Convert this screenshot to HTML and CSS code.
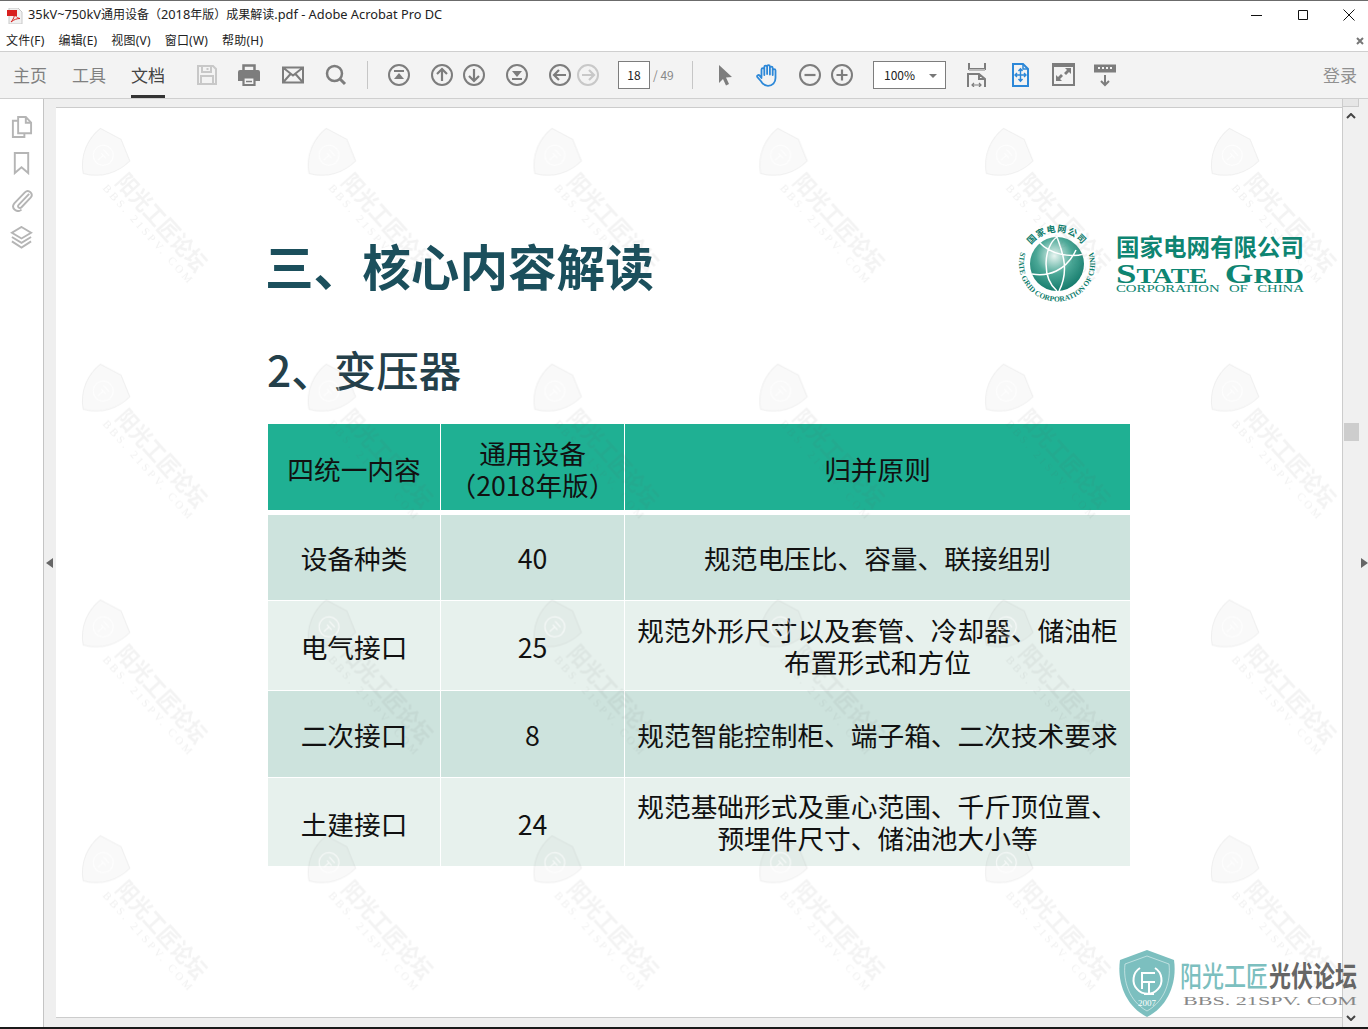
FILE: index.html
```html
<!DOCTYPE html>
<html lang="zh-CN">
<head>
<meta charset="utf-8">
<title>35kV~750kV通用设备（2018年版）成果解读.pdf - Adobe Acrobat Pro DC</title>
<link rel="stylesheet" href="styles.css">
</head>
<body>
<div class="app">
  <header class="titlebar">
    <svg class="pdficon" viewBox="0 0 16 16"><path d="M2 0h9l4 4v12H2z" fill="#f1f1f1" stroke="#c9c9c9"/><path d="M0 2h10v6H0z" fill="#d8201f"/><path d="M4 14c2-2 4-6 3.500-9 1 4 3 5 5.500 5.500-3 0-6 1-9 3.500z" fill="none" stroke="#d8201f"/></svg>
    <span class="wintitle"><span class="lat">35kV~750kV</span>通用设备（<span class="lat">2018</span>年版）成果解读<span class="lat">.pdf - Adobe Acrobat Pro DC</span></span>
    <div class="winctl">
      <svg viewBox="0 0 12 12"><path d="M0 6.500h11" stroke="#111"/></svg>
      <svg viewBox="0 0 12 12"><path d="M1.500 1.500h9v9h-9z" fill="none" stroke="#111"/></svg>
      <svg viewBox="0 0 12 12"><path d="M.5.500l11 11M11.500.500l-11 11" stroke="#111"/></svg>
    </div>
  </header>
  <nav class="menubar">
    <span>文件(F)</span><span>编辑(E)</span><span>视图(V)</span><span>窗口(W)</span><span>帮助(H)</span>
    <svg class="menuclose" viewBox="0 0 8 8"><path d="M1 1l6 6M7 1l-6 6" stroke="#777" stroke-width="2"/></svg>
  </nav>
  <div class="toolbar">
    <a class="tab">主页</a><a class="tab">工具</a><a class="tab active">文档</a>
    <svg class="tool t-first faint" viewBox="0 0 24 24"><path d="M3 3h15l3 3v15H3z M7 3v6h9V3 M6 21v-8h12v8 M12.500 5v2" fill="none" stroke-width="2"/></svg>
    <svg class="tool m18" viewBox="0 0 24 24"><path d="M6.500 8V2.500h11V8" fill="none" stroke-width="2.500"/><path class="fill" d="M3 7h18a2 2 0 0 1 2 2v9h-5v-4H6v4H1V9a2 2 0 0 1 2-2z"/><path d="M6.500 14.500h11v7.500h-11z" fill="none" stroke-width="2.200"/><path d="M9 18.500h6" fill="none" stroke-width="1.500"/></svg>
    <svg class="tool m20" viewBox="0 0 24 24"><path d="M2 4.500h20v15H2z M2 4.500l10 8 10-8 M2 19.500l7.500-8.500 M22 19.500l-7.500-8.500" fill="none" stroke-width="2"/></svg>
    <svg class="tool" viewBox="0 0 24 24"><circle cx="10.500" cy="10.500" r="7.500" fill="none" stroke-width="2.500"/><path d="M16 16l5 5" stroke-width="3" fill="none"/></svg>
    <span class="sep"></span>
    <svg class="tool" viewBox="0 0 24 24"><circle cx="12" cy="12" r="10" fill="none" stroke-width="2"/><path d="M7 8h10" fill="none" stroke-width="2"/><path class="fill" d="M12 10l5 6H7z"/></svg>
    <svg class="tool" viewBox="0 0 24 24"><circle cx="12" cy="12" r="10" fill="none" stroke-width="2"/><path d="M12 18V6.500 M7 11l5-5 5 5" fill="none" stroke-width="2.200"/></svg>
    <svg class="tool near" viewBox="0 0 24 24"><circle cx="12" cy="12" r="10" fill="none" stroke-width="2"/><path d="M12 6v11.500 M7 13l5 5 5-5" fill="none" stroke-width="2.200"/></svg>
    <svg class="tool" viewBox="0 0 24 24"><circle cx="12" cy="12" r="10" fill="none" stroke-width="2"/><path d="M7 16h10" fill="none" stroke-width="2"/><path class="fill" d="M12 14L7 8h10z"/></svg>
    <svg class="tool" viewBox="0 0 24 24"><circle cx="12" cy="12" r="10" fill="none" stroke-width="2"/><path d="M18 12H6.500 M11 7l-5 5 5 5" fill="none" stroke-width="2.200"/></svg>
    <svg class="tool adj faint" viewBox="0 0 24 24"><circle cx="12" cy="12" r="10" fill="none" stroke-width="2"/><path d="M6 12h11.500 M13 7l5 5-5 5" fill="none" stroke-width="2.200"/></svg>
    <span class="pagebox">18</span><span class="pagecount">/ 49</span>
    <span class="sep sep-far"></span>
    <svg class="tool m20" viewBox="0 0 24 24"><path class="fill" d="M6 2l13 12-6 .5 3 6.500-3 1.500-3-6.500L6 20z"/></svg>
    <svg class="tool m18 blue" viewBox="0 0 24 24"><path d="M6.500 14V6.500a1.400 1.400 0 0 1 2.800 0V12 M9.300 11V4a1.400 1.400 0 0 1 2.800 0v7 M12.100 11V3.500a1.400 1.400 0 0 1 2.800 0V11 M14.900 11.500V5a1.400 1.400 0 0 1 2.800 0v7 M17.700 10V7.500a1.400 1.400 0 0 1 2.800 0V15c0 4.500-3 7.800-7.500 7.800-3.500 0-5.200-1.500-6.800-4.300L2.300 14c-.8-1.500 1.300-2.800 2.400-1.400L6.500 15" fill="none" stroke-width="1.800" stroke-linecap="round"/></svg>
    <svg class="tool" viewBox="0 0 24 24"><circle cx="12" cy="12" r="10" fill="none" stroke-width="2"/><path d="M6.500 12h11" fill="none" stroke-width="2.200"/></svg>
    <svg class="tool near" viewBox="0 0 24 24"><circle cx="12" cy="12" r="10" fill="none" stroke-width="2"/><path d="M6.500 12h11 M12 6.500v11" fill="none" stroke-width="2.200"/></svg>
    <span class="zoombox">100%<i class="caret"></i></span>
    <svg class="tool" viewBox="0 0 24 24"><path d="M4 0v6h16V0" fill="none" stroke-width="2"/><path d="M4 7h16" fill="none" stroke="#bbb" stroke-width="2"/><path d="M3 20v-9h11l6 5v4 M14 11v5h6" fill="none" stroke-width="2"/><path d="M3 19v5 M20 19v5" fill="none" stroke-width="2"/><path d="M7 22h9 M9 20l-2 2 2 2 M14 20l2 2-2 2" fill="none" stroke-width="1.200"/></svg>
    <svg class="tool blue" viewBox="0 0 24 24"><path d="M5 1h10l5 5v17H5z" fill="none" stroke-width="2"/><path d="M15 1v5h5" fill="none" stroke-width="1.500"/><path d="M12.500 6v12 M10.500 8l2-2.200 2 2.200 M10.500 16l2 2.200 2-2.200 M7 12h11 M9 10l-2 2 2 2 M16 10l2 2-2 2" fill="none" stroke-width="1.400"/></svg>
    <svg class="tool" viewBox="0 0 24 24"><path d="M2 1h21v21H2z" fill="none" stroke-width="2"/><path class="fill" d="M2 1h21v3H2z"/><path class="fill" d="M14 5h6v6l-2-2-3 3-2-2 3-3z M11 18H5v-6l2 2 3-3 2 2-3 3z"/></svg>
    <svg class="tool" viewBox="0 0 24 24"><path class="fill" d="M0 1.500h22v8H0z"/><path d="M4 5h2 M8 5h2 M12 5h2 M16 5h2" stroke="#f3f3f3" stroke-width="2" fill="none"/><path d="M11 12v10 M7 18l4 4 4-4" fill="none" stroke-width="2"/></svg>
    <a class="login">登录</a>
  </div>
  <main class="main">
    <aside class="rail">
      <svg viewBox="0 0 24 24"><path d="M8.500 2h8l5.500 6v11H8.500z M16.500 2v6H22 M8.500 6H3v17h12v-4" fill="none"/></svg>
      <svg viewBox="0 0 24 24"><path d="M5 1h14v21l-7-6-7 6z" fill="none"/></svg>
      <svg viewBox="0 0 24 24"><path d="M20 6L9 17.500c-2 2 1 4.500 3 2.500L21.500 10c3.500-4-2-9-6-5.500L4.500 16c-4 5 3 10.500 7.500 6.500" fill="none" transform="translate(0 -1)"/></svg>
      <svg viewBox="0 0 24 24"><path d="M12 1l10 6-10 6L2 7z M2 11.500l10 6 10-6 M2 16l10 6.500L22 16" fill="none"/></svg>
    </aside>
    <div class="pane">
      <i class="tri tri-left"></i>
      <article class="page">
        <div class="pagehead">
          <h1>三、核心内容解读</h1>
          <svg class="sglogo" viewBox="0 0 290 82">
            <defs>
              <radialGradient id="globe" cx=".45" cy=".35" r=".75"><stop offset="0" stop-color="#e8f5f1"/><stop offset=".45" stop-color="#4aa796"/><stop offset="1" stop-color="#056e60"/></radialGradient>
              <path id="arcTop" d="M8 40a32 32 0 0 1 64 0"/>
              <path id="arcBot" d="M8 19a38 38 0 1 0 64 0"/>
            </defs>
            <circle cx="40" cy="40" r="27" fill="url(#globe)"/>
            <path d="M40 13c-13 9-16 40 0 54 M23 19c10 11 30 15 44 11 M15 50c16 3 34-3 44-24 M40 13c3 10 14 31 2 54" fill="none" stroke="#fff" stroke-width="1.500"/>
            <text class="ringcn"><textPath href="#arcTop" startOffset="50%" text-anchor="middle">国家电网公司</textPath></text>
            <text class="ringen"><textPath href="#arcBot" startOffset="50%" text-anchor="middle">STATE GRID CORPORATION OF CHINA</textPath></text>
            <text class="sgcn" x="99" y="32" textLength="188" lengthAdjust="spacingAndGlyphs">国家电网有限公司</text>
            <text class="sgen" x="99" y="59" textLength="188" lengthAdjust="spacingAndGlyphs"><tspan class="cap">S</tspan>TATE <tspan class="cap">G</tspan>RID</text>
            <text class="sgsub" x="99" y="68" textLength="188" lengthAdjust="spacingAndGlyphs">CORPORATION OF CHINA</text>
          </svg>
        </div>
        <h2>2、变压器</h2>
        <div class="grid">
          <div class="cell head">四统一内容</div>
          <div class="cell head">通用设备<br>（2018年版）</div>
          <div class="cell head">归并原则</div>
          <div class="cell odd">设备种类</div>
          <div class="cell odd">40</div>
          <div class="cell odd">规范电压比、容量、联接组别</div>
          <div class="cell even nudge">电气接口</div>
          <div class="cell even nudge">25</div>
          <div class="cell even">规范外形尺寸以及套管、冷却器、储油柜<br>布置形式和方位</div>
          <div class="cell odd nudge">二次接口</div>
          <div class="cell odd nudge">8</div>
          <div class="cell odd nudge">规范智能控制柜、端子箱、二次技术要求</div>
          <div class="cell even nudge2">土建接口</div>
          <div class="cell even nudge2">24</div>
          <div class="cell even">规范基础形式及重心范围、千斤顶位置、<br>预埋件尺寸、储油池大小等</div>
        </div>
        <svg class="watermark" aria-hidden="true">
          <defs>
            <pattern id="wm" width="225.800" height="235.800" patternUnits="userSpaceOnUse">
              <g transform="translate(46 43) rotate(48)">
                <g transform="translate(4 3)">
                  <path class="wm-shield" d="M0-25l22 8c1 16-6 33-22 43-16-10-23-27-22-43z"/>
                  <circle class="wm-ring" cx="0" cy="-1" r="10"/>
                  <path class="wm-ring" d="M-4-5h8 M-3-1h7 M0-1v7"/>
                </g>
                <text class="wm-cn" x="32" y="12" textLength="122" lengthAdjust="spacingAndGlyphs">阳光工匠论坛</text>
                <text class="wm-en" x="28" y="25" textLength="128" lengthAdjust="spacing">BBS. 21SPV. COM</text>
              </g>
            </pattern>
          </defs>
          <rect width="100%" height="100%" fill="url(#wm)"/>
        </svg>
      </article>
    </div>
    <div class="scroll">
      <span class="scrolltop"></span>
      <svg class="chev" viewBox="0 0 10 6"><path d="M1 5l4-4 4 4" fill="none" stroke="#444" stroke-width="2"/></svg>
      <span class="thumb"></span>
      <svg class="chev chev-down" viewBox="0 0 10 6"><path d="M1 1l4 4 4-4" fill="none" stroke="#444" stroke-width="2"/></svg>
    </div>
    <div class="strip"><i class="tri tri-right"></i></div>
    <svg class="forumlogo" viewBox="0 0 240 70">
      <path d="M29 1l27 10c3 20-4 45-27 57C6 56-1 31 2 11z" fill="#7cbfbf"/>
      <path d="M29 7l22 8c2 17-4 37-22 47C11 52 5 32 7 15z" fill="none" stroke="#fff" stroke-opacity=".5"/>
      <path d="M37 19a14 14 0 1 1-15 0 M23 24h14 M24 24v16 M24 33h13 M31 33v12 M26 45h10" fill="none" stroke="#fff" stroke-width="2"/>
      <text class="fl-year" x="29" y="57" text-anchor="middle">2007</text>
      <text class="fl-a" x="62" y="38" textLength="88" lengthAdjust="spacingAndGlyphs">阳光工匠</text>
      <text class="fl-b" x="151" y="38" textLength="88" lengthAdjust="spacingAndGlyphs">光伏论坛</text>
      <text class="fl-c" x="65" y="56" textLength="174" lengthAdjust="spacingAndGlyphs">BBS. 21SPV. COM</text>
    </svg>
  </main>
  <div class="taskedge"></div>
</div>
</body>
</html>
```

FILE: styles.css
```css
* { box-sizing: border-box; }
html, body { margin: 0; padding: 0; }
body { font-family: "Noto Sans CJK SC", "Noto Sans", sans-serif; background: #fff; overflow: hidden; text-spacing-trim: space-all; }
.app { width: 1368px; height: 1029px; display: flex; flex-direction: column; border-top: 1px solid #6b6b6b; position: relative; overflow: hidden; }

.titlebar { height: 30px; flex: none; display: flex; align-items: center; padding-left: 7px; }
.pdficon { width: 16px; height: 16px; }
.wintitle { font-family: "Noto Sans", "Noto Sans CJK SC", sans-serif; font-size: 12px; line-height: 16px; margin-left: 5px; margin-top: -3px; color: #222; white-space: nowrap; }
.lat { font-size: 12.800px; }
.winctl { margin-left: auto; display: flex; margin-right: 13px; gap: 34px; margin-top: -2px; }
.winctl svg { width: 12px; height: 12px; }

.menubar { height: 21px; flex: none; display: flex; align-items: center; padding-left: 6px; gap: 14px; font-family: "Noto Sans", "Noto Sans CJK SC", sans-serif; font-size: 12px; line-height: 16px; letter-spacing: .2px; color: #222; border-bottom: 1px solid #cfcfcf; position: relative; }
.menuclose { width: 8px; height: 8px; margin-left: auto; margin-right: 4px; }

.toolbar { height: 47px; flex: none; display: flex; align-items: center; background: #f3f3f3; border-bottom: 1px solid #cfcfcf; padding-left: 13px; }
.tab { align-self: stretch; display: flex; align-items: center; font-size: 17px; color: #808080; border-top: 1px solid transparent; border-bottom: 3px solid transparent; margin-right: 25px; }
.tab.active { color: #444; border-bottom-color: #333; margin-right: 0; }
.tool { width: 24px; height: 24px; flex: none; margin-left: 19px; stroke: #7d7d7d; }
.tool .fill { fill: #7d7d7d; stroke: none; }
.tool.faint { stroke: #c8c8c8; }
.tool.blue { stroke: #2d88d8; }
.t-first { margin-left: 30px; }
.m18 { margin-left: 18px; }
.m20 { margin-left: 20px; }
.near { margin-left: 8px; }
.adj { margin-left: 4px; }
.sep { width: 1px; height: 28px; background: #c6c6c6; margin-left: 19px; flex: none; }
.sep-far { margin-left: 18px; }
.pagebox { width: 32px; height: 28px; margin-left: 18px; border: 1px solid #7d7d7d; background: #fff; font-size: 12px; color: #222; display: flex; align-items: center; justify-content: center; flex: none; padding-bottom: 2px; }
.pagecount { margin-left: 3px; width: 21px; font-size: 12px; color: #888; white-space: nowrap; flex: none; margin-top: -2px; }
.zoombox { width: 73px; height: 28px; margin-left: 19px; border: 1px solid #7d7d7d; background: #fff; font-size: 12px; color: #222; display: flex; align-items: center; padding-left: 10px; padding-bottom: 2px; position: relative; flex: none; }
.caret { position: absolute; right: 8px; top: 12px; border: 4px solid transparent; border-top-color: #777; border-bottom: 0; }
.login { margin-left: auto; margin-right: 11px; font-size: 17px; color: #909090; margin-top: -2px; }

.main { flex: 1; display: flex; position: relative; min-height: 0; }
.rail { width: 44px; flex: none; background: #fff; border-right: 1px solid #c4c4c4; display: flex; flex-direction: column; align-items: center; padding-top: 16px; gap: 14px; padding-right: 1px; }
.rail svg { width: 23px; height: 23px; stroke: #b5b5b5; stroke-width: 2; }
.pane { width: 1298px; flex: none; background: #efefef; padding: 8px 0 9px 12px; display: flex; position: relative; }
.tri { position: absolute; top: 459px; border: 5px solid transparent; }
.tri-left { left: 2px; border-right: 7px solid #666; border-left: 0; }
.tri-right { right: 0; border-right: 7px solid #666; border-left: 0; transform: scaleX(-1); }
.page { flex: 1; position: relative; background: #fff; border-top: 1px solid #ccc; border-bottom: 1px solid #ccc; padding: 112px 36px 0 212px; overflow: hidden; }
.pagehead { height: 96px; display: flex; align-items: center; justify-content: space-between; }
h1 { margin: -6px 0 0 -3px; font-size: 48.600px; line-height: 64px; font-weight: 700; color: #1b4f5c; }
h2 { margin: 25px 0 27px -1px; font-size: 42.500px; line-height: 56px; font-weight: 500; color: #24404a; }
.sglogo { width: 290px; height: 82px; margin-right: -1px; margin-top: -6px; }
.ringcn { font-size: 9px; font-weight: 700; letter-spacing: 1px; fill: #0d7c6b; }
.ringen { font-family: "Liberation Serif", serif; font-size: 7.500px; font-weight: 700; fill: #0d7c6b; }
.sgcn { font-size: 23.500px; font-weight: 700; fill: #0e8572; }
.sgen { font-family: "Liberation Serif", serif; font-size: 21px; font-weight: 700; fill: #0e8572; word-spacing: 8px; }
.sgen .cap { font-size: 28px; }
.sgsub { font-family: "Liberation Serif", serif; font-size: 10.500px; fill: #0e8572; word-spacing: 4px; }

.grid { width: 862px; display: grid; grid-template-columns: 172px 183px 505px; grid-template-rows: 90px 85px 89px 86px 88px; gap: 1px; }
.cell { display: flex; align-items: center; justify-content: center; text-align: center; font-size: 26.700px; line-height: 32px; color: #111; }
.head { background: #1fb093; margin-bottom: 4px; padding-top: 4px; }
.odd { background: #cde3dd; }
.even { background: #e7f1ed; }
.nudge { padding-top: 2px; }
.nudge2 { padding-top: 4px; }

.watermark { position: absolute; left: 0; top: 0; width: 100%; height: 100%; pointer-events: none; }
.wm-shield { fill: rgba(90, 90, 90, .04); stroke: rgba(90, 90, 90, .08); }
.wm-ring { fill: none; stroke: rgba(255, 255, 255, .8); }
.wm-cn { font-size: 23px; font-weight: 700; fill: rgba(80, 80, 80, .07); }
.wm-en { font-family: "Liberation Serif", serif; font-size: 11px; fill: rgba(80, 80, 80, .09); }

.scroll { width: 17px; flex: none; background: #f0f0f0; border-left: 1px solid #ccc; position: relative; display: flex; flex-direction: column; align-items: center; }
.scrolltop { width: 100%; height: 8px; background: #e6e6e6; border-bottom: 1px solid #ccc; border-right: 1px solid #ccc; }
.chev { width: 10px; height: 6px; margin-top: 6px; }
.thumb { width: 15px; height: 18px; background: #cdcdcd; margin-top: 304px; }
.chev-down { margin-top: auto; margin-bottom: 6px; }
.strip { width: 9px; flex: none; background: #f0f0f0; position: relative; }

.forumlogo { position: absolute; left: 1118px; top: 850px; width: 240px; height: 70px; }
.fl-year { font-family: "Liberation Serif", serif; font-size: 9px; fill: #fff; }
.fl-a { font-size: 28px; font-weight: 500; fill: #7cbfbf; }
.fl-b { font-size: 28px; font-weight: 700; fill: #666; }
.fl-c { font-family: "Liberation Serif", serif; font-size: 12.500px; fill: #888; }

.taskedge { height: 2px; flex: none; background: #1a1a1a; }
```
